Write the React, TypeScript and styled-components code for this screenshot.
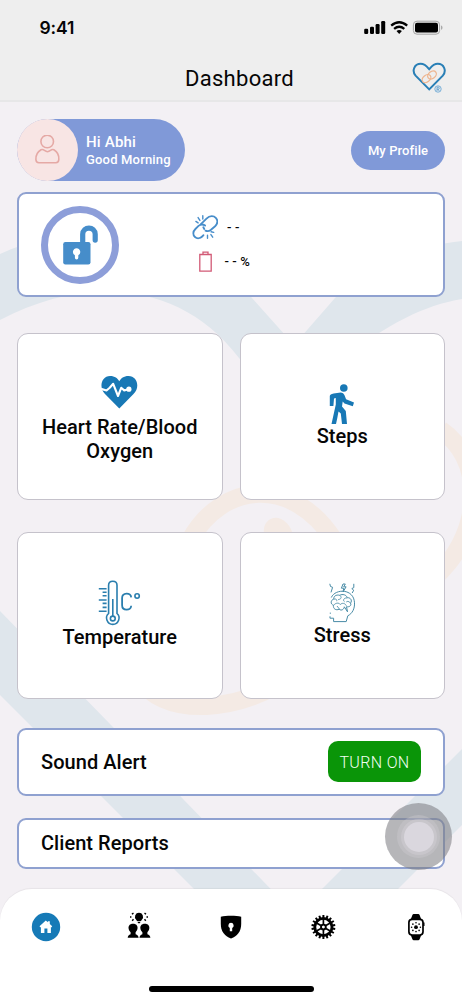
import React from 'react';
import styled, { createGlobalStyle } from 'styled-components';

const Global = createGlobalStyle`
  * { box-sizing: border-box; }
  body { margin: 0; background: #f3f0f4; font-family: Roboto, "Liberation Sans", sans-serif; color: #060606; }
  svg { display: block; flex: none; }
  button { font: inherit; border: 0; padding: 0; }
`;

const BLUE = '#1878b5';
const PERI = '#8099d8';

const Screen = styled.div`
  position: relative;
  width: 462px;
  height: 1000px;
  overflow: hidden;
  display: flex;
  flex-direction: column;
  background: #f3f0f4;
`;
const Watermark = styled.svg`
  position: absolute;
  inset: 0;
`;
const Header = styled.header`
  position: relative;
  height: 102px;
  background: #eeeeee;
  border-bottom: 2px solid #e7e7e8;
`;
const StatusBar = styled.div`
  height: 56px;
  padding: 0 19px 0 39.5px;
  display: flex;
  align-items: center;
  justify-content: space-between;
`;
const Clock = styled.span`
  font: 600 17.5px/22px Inter, sans-serif;
  letter-spacing: -0.1px;
`;
const TitleBar = styled.div`
  height: 44px;
  padding: 0 15px 0 16px;
  display: grid;
  grid-template-columns: 36px 1fr 36px;
  align-items: center;
`;
const Title = styled.h1`
  margin: 2px 0 0 16px;
  text-align: center;
  font-size: 22px;
  font-weight: 400;
  line-height: 26px;
  letter-spacing: 0.3px;
`;
const Content = styled.main`
  position: relative;
  height: 787px;
  flex: none;
  padding: 17px 17px 20px;
  display: flex;
  flex-direction: column;
`;
const ProfileRow = styled.div`
  display: flex;
  align-items: center;
  justify-content: space-between;
`;
const Greeting = styled.div`
  width: 168px;
  height: 62px;
  border-radius: 31px;
  background: ${PERI};
  color: #fff;
  display: flex;
  align-items: center;
  gap: 8px;
`;
const Avatar = styled.div`
  width: 61px;
  height: 62px;
  border-radius: 50%;
  background: #f8e5e4;
  display: flex;
  align-items: center;
  justify-content: center;
`;
const Hello = styled.div`
  font-size: 15px;
  font-weight: 500;
  line-height: 18px;
  letter-spacing: 0.2px;
`;
const Wish = styled.div`
  font-size: 13px;
  font-weight: 500;
  line-height: 17px;
  letter-spacing: 0.18px;
  white-space: nowrap;
`;
const ProfileButton = styled.button`
  width: 94px;
  height: 39px;
  border-radius: 20px;
  background: ${PERI};
  color: #fff;
  font-size: 13px;
  font-weight: 500;
  letter-spacing: 0.1px;
`;
const Panel = styled.section<{ $height: number; $top: number }>`
  height: ${(p) => p.$height}px;
  margin-top: ${(p) => p.$top}px;
  flex: none;
  padding: 0 22px;
  background: #fff;
  border: 2px solid #8fa1d0;
  border-radius: 9px;
  display: flex;
  align-items: center;
  justify-content: space-between;
`;
const DevicePanel = styled(Panel)`
  justify-content: flex-start;
  gap: 73px;
`;
const LockRing = styled.div`
  width: 78px;
  height: 78px;
  border: 7px solid #8d9ed9;
  border-radius: 50%;
  display: flex;
  align-items: center;
  justify-content: center;
`;
const Readings = styled.div`
  display: flex;
  flex-direction: column;
  gap: 9px;
`;
const Reading = styled.div<{ $indent?: number }>`
  height: 25px;
  display: flex;
  align-items: center;
  gap: 9px;
  padding-left: ${(p) => p.$indent ?? 0}px;
  font-size: 13px;
  font-weight: 500;
  letter-spacing: 0.15px;
  white-space: pre;
`;
const Grid = styled.div`
  margin-top: 36px;
  display: grid;
  grid-template-columns: 1fr 1fr;
  grid-auto-rows: 167px;
  gap: 31.5px 17px;
`;
const Tile = styled.div<{ $pad: number }>`
  background: #fff;
  border: 1px solid #c5c2cb;
  border-radius: 11px;
  display: flex;
  flex-direction: column;
  align-items: center;
  padding-top: ${(p) => p.$pad}px;
`;
const TileLabel = styled.div<{ $shift?: number }>`
  width: 170px;
  margin-top: ${(p) => p.$shift ?? 0}px;
  text-align: center;
  font-size: 20px;
  font-weight: 500;
  line-height: 24px;
  letter-spacing: 0.03px;
`;
const PanelTitle = styled.div`
  font-size: 20px;
  font-weight: 500;
  letter-spacing: 0.05px;
`;
const TurnOn = styled.button`
  width: 93px;
  height: 41px;
  padding-top: 2px;
  border-radius: 10px;
  background: #0a9508;
  color: #f2fff2;
  font-size: 16px;
  font-weight: 300;
  letter-spacing: 0.35px;
`;
const Nav = styled.nav`
  position: relative;
  height: 111px;
  border-radius: 32px 32px 0 0;
  background: #fff;
  box-shadow: 0 -1px 1px rgba(0, 0, 0, 0.05);
  display: flex;
  flex-direction: column;
  align-items: center;
`;
const Tabs = styled.div`
  width: 100%;
  height: 96.5px;
  padding-top: 23px;
  display: grid;
  grid-template-columns: repeat(5, 1fr);
  justify-items: center;
`;
const HomeIndicator = styled.div`
  width: 165px;
  height: 6px;
  border-radius: 3px;
  background: #000;
`;
const Assist = styled.div`
  position: absolute;
  left: 385px;
  top: 803px;
  width: 67px;
  height: 67px;
  border-radius: 50%;
  background: rgba(125, 125, 130, 0.56);
  display: flex;
  align-items: center;
  justify-content: center;
`;
const AssistRing = styled.div`
  width: 43px;
  height: 43px;
  border-radius: 50%;
  background: rgba(210, 208, 216, 0.32);
  display: flex;
  align-items: center;
  justify-content: center;
`;
const AssistCore = styled.div`
  width: 30px;
  height: 30px;
  border-radius: 50%;
  background: #dad7de;
  box-shadow: 0 0 0 3px rgba(215, 211, 218, 0.4);
`;

const BackgroundArt = () => (
  <Watermark width="462" height="1000" viewBox="0 0 462 1000" fill="none">
    <g stroke="#f4eae4" strokeWidth="18">
      <path d="M190 540C222 482 292 475 334 540C372 600 310 700 206 706C176 707 152 698 138 678" />
      <path d="M441 430C482 458 482 520 449 562C405 616 355 620 300 600" />
    </g>
    <path d="M264 534C262 522 272 515 281 519C290 523 294 534 293 540Z" fill="#f4eae4" />
    <path
      d="M0 254C70 222 190 218 252 298L294 345L335 298C372 262 415 246 462 241C610 232 720 540 588 699L296 991L-36 659C-150 530 -120 310 0 254ZM0 320C-80 370 -100 500 0 611L296 915L540 671C670 520 560 290 462 299C425 305 385 325 345 358L294 417L239 358C180 280 85 275 0 320Z"
      fill="#dfe6ec"
      fillRule="evenodd"
    />
  </Watermark>
);

const SignalIcons = () => (
  <svg width="79" height="16" viewBox="364 20 79 16">
    <g fill="#000">
      <rect x="364.2" y="28.8" width="4" height="5.2" rx="1.2" />
      <rect x="370" y="26.8" width="4" height="7.2" rx="1.2" />
      <rect x="375.6" y="24" width="4" height="10" rx="1.2" />
      <rect x="381.2" y="21" width="4" height="13" rx="1.2" />
      <rect x="415" y="22.8" width="23" height="9.7" rx="2" />
      <path d="M441 25.5C443 26.2 443 29 441 29.8Z" fill="#aaa" />
      <path d="M396.5 30.9Q399.2 29 401.9 30.9L399.2 34Z" />
    </g>
    <g fill="none" stroke="#000" strokeWidth="2.3">
      <path d="M391.2 25.7Q399.2 18.8 407.2 25.7" />
      <path d="M394.1 28.9Q399.2 24.6 404.3 28.9" />
    </g>
    <rect x="413.4" y="21.2" width="26.2" height="13" rx="3.6" fill="none" stroke="#a4a4a4" />
  </svg>
);

const HeartLogo = () => (
  <svg width="36" height="32" viewBox="411 62 36 32" fill="none">
    <path d="M429.2 89.4L415.6 75.6C411.4 70.6 414.6 63.8 420.6 63.8C425.2 63.8 427.2 66.8 429.2 69.2C431.2 66.8 433.2 63.8 437.8 63.8C443.8 63.8 447 70.6 442.8 75.6L429.2 89.4Z" stroke="#297fb6" strokeWidth="2" />
    <g stroke="#eeb58f" strokeWidth="1.3">
      <ellipse cx="426.5" cy="78.6" rx="4.8" ry="3.4" transform="rotate(-38 426.5 78.6)" />
      <ellipse cx="432" cy="75" rx="4.8" ry="3.4" transform="rotate(-38 432 75)" />
    </g>
    <circle cx="438" cy="89" r="3.2" stroke="#5c9fd2" strokeWidth=".8" />
    <path d="M437 91V87.2H438.3C439.7 87.2 439.7 89.2 438.3 89.2H437M438.2 89.2L439.2 91" stroke="#438fc7" strokeWidth=".7" />
  </svg>
);

const PersonIcon = () => (
  <svg width="27" height="31" viewBox="34.5 134.5 27 31" fill="none" stroke="#e5a9a5" strokeWidth="1.6">
    <circle cx="47.7" cy="141" r="6.3" />
    <path d="M41.5 149.3C44.2 147.7 45 151.2 48 151.2C51 151.2 51.7 147.7 54.4 149.3C58 151.4 59.6 154.6 59.3 159C59.2 161.2 58.5 162.2 56.4 162.2H39.4C37.2 162.2 36.5 161.2 36.4 159C36.2 154.6 38 151.4 41.5 149.3Z" />
  </svg>
);

const UnlockIcon = () => (
  <svg width="35" height="40" viewBox="63 225 35 40">
    <path d="M82.7 243V233.6C82.7 225.3 95.2 225.3 95.2 233.6V239.4" transform="translate(0 .7)" fill="none" stroke="#468dca" strokeWidth="5.2" strokeLinecap="round" />
    <rect x="63.2" y="242" width="27.3" height="22.5" rx="2.2" fill="#468dca" />
    <path d="M76.6 248.2A3.8 3.8 0 0 1 78.3 255.3V257.8A1.7 1.7 0 0 1 74.9 257.8V255.3A3.8 3.8 0 0 1 76.6 248.2Z" fill="#fff" />
  </svg>
);

const BrokenLink = () => (
  <svg width="26" height="25" viewBox="192.5 215 26 25" fill="none" stroke="#478dca" strokeWidth="1.8" strokeLinecap="round">
    <path d="M201.4 224.2L207 218.6C210.4 215.2 214.4 215.8 216.3 217.9C218.4 220.3 218.2 223.6 215.6 226.3L211.2 230C209.6 231.2 207.6 231.4 206 230.6" />
    <path d="M205.6 225.6C203.4 224 200.8 224.4 199 225.9L195.9 229C193.2 231.6 193.2 235 195.5 237C197.7 239 200.8 238.4 202.7 236.5L204 235.2M203.8 227.2L204.8 229" />
    <path d="M203.3 215.8V219M198.6 217.6L200.4 220.4M196.4 221.4L198.6 222.9M208 235.2V238.2M211.4 234.6L213.2 237.2M211.6 231.8L214.2 232.4" strokeWidth="1.4" />
  </svg>
);

const BatteryIcon = () => (
  <svg width="13" height="21" viewBox="199 251 13 21" fill="none" stroke="#d25a76" strokeWidth="1.3">
    <path d="M199.8 254.5H211.2V271.1H199.8ZM203 254.3V252.1H208V254.3" />
  </svg>
);

const HeartRateIcon = () => (
  <svg width="37" height="34" viewBox="101 375 37 34">
    <path d="M119.3 408.5L105 394C98.5 387.5 101.4 376 110 376C115 376 117.6 378.4 119.3 381.3C121 378.4 123.6 376 128.5 376C137.3 376 140.4 387.5 133.5 394Z" fill={BLUE} />
    <path d="M101 388.8L106.5 390.5L109.7 387.8L113.2 383.8L118 396L121.2 387.8L124.2 390.4L129 389" fill="none" stroke="#fff" strokeWidth="2.1" strokeLinejoin="round" />
    <circle cx="128.9" cy="389.2" r="2.6" fill="#fff" />
  </svg>
);

const WalkIcon = () => (
  <svg width="26" height="41" viewBox="329 384 26 41">
    <circle cx="343.8" cy="388" r="3.8" fill={BLUE} />
    <path d="M333.6 393.5L340.7 392.5Q343.5 392.4 344.4 395L346.1 399.3L354 402.5L352.8 406.3L344.5 403.4L342.7 401.5L342 406.4L345.8 411L347 424H342L340.8 413.5L338.5 411.5L337.3 418L336 424H331.5L335.8 404.5V398L334 398.4L333.4 406H329.8V396Q329.9 394.1 333.6 393.5Z" fill={BLUE} />
  </svg>
);

const ThermoIcon = () => (
  <svg width="43" height="46" viewBox="98 580 43 46" fill="none" stroke="#2a7eae" strokeWidth="1.6">
    <path d="M108.6 613.5V585.2C108.6 579.9 117 579.9 117 585.2V613.5C121.2 617 118.5 624.4 112.8 624.4C107.1 624.4 104.4 617 108.6 613.5Z" />
    <path d="M112.8 599V616M98.8 588.8H106.6M102.6 592.2H106.6M102.6 595.8H106.6M98.8 600H106.6M102.6 603.4H106.6M102.6 607.4H106.6M98.8 611.3H106.6" />
    <circle cx="112.8" cy="618.5" r="2.4" />
    <path d="M131.2 597.4C131 592.2 122.1 592.2 122.1 598V605.2C122.1 611 131 611 131.2 605.8" strokeWidth="1.8" />
    <circle cx="137.1" cy="596" r="2.2" />
  </svg>
);

const StressIcon = () => (
  <svg width="27" height="40" viewBox="329 583 27 40" fill="none" stroke="#488ba6" strokeWidth="1">
    <path d="M329.8 618.2H333.6V621.6H346.2L347.8 615.8C352.4 613.5 354.8 608.6 354.5 602.8C353.9 588.6 335.5 588.2 331.3 597.5M330.3 612.6V613.8M330 616.3V618" />
    <path d="M339.8 595.3C336 594.3 333.3 596.5 333.9 599C330.3 600.1 330.4 604.4 333.6 605.3C332.7 608.6 336 610.8 339.1 609.2C341.8 611.4 344.2 608.8 344.3 606.8L347.5 611.8L346.5 606.7C349 607.2 351.9 605.8 350.5 603.1C352.7 600.4 350.2 597.2 347.3 597.8C346.4 594.7 342.5 593.7 339.8 595.3Z" />
    <path d="M340 595.5C342.6 598 340.1 599.5 338 599.6M334.1 599.2C336 598.4 337.2 600 336.7 601.2M333.7 605.2C335.6 602.8 338.7 602.4 340.3 604.5C342.2 602.5 345.2 603.2 346.4 605.8M347.1 597.9C343.6 597.7 342.6 600.6 344.6 601.8M350.3 603C348.6 600.7 346.9 601.3 346.2 602.1M337 606L339.4 609" strokeWidth=".85" />
    <path d="M329.8 583.8L330.5 586.5L332.6 587.3L331 592.4M343 584L341.4 588.2H343.8L343 592L346.1 586.8H343.7L345.3 584ZM353.8 583.8V587.6L351.8 588.6L353.7 590.2L352.2 593" />
  </svg>
);

const HomeIcon = () => (
  <svg width="30" height="30" viewBox="31.5 912 30 30">
    <circle cx="46.5" cy="927" r="14.2" fill="#167ab7" />
    <path d="M46.3 920.6L48.4 922.3V921.3H50.3V924L52.7 926.2L51.8 927.4L51.4 927V933H47.9V928.6H44.9V933H41.4V927L41 927.4L40 926.2Z" fill="#fff" />
  </svg>
);

const PeopleIcon = () => (
  <svg width="30" height="30" viewBox="124 912 30 30" fill="#000">
    <path d="M139 912.8A4 4 0 0 1 141.8 919.7L141 921H137L136.2 919.7A4 4 0 0 1 139 912.8ZM137.4 921.8H140.6L139.8 923.2H138.2Z" />
    <path d="M133 923.8C136.5 923.8 137.9 926 137.5 928.6C137.3 930.5 136.2 931.6 135.6 932.3V934.2C137.4 934.9 138.4 935.7 138.6 937.7H127.7C127.9 935.7 128.8 934.9 130.6 934.2V932.3C129.8 931.6 128.8 930.5 128.6 928.6C128.2 926 129.6 923.8 133 923.8Z" />
    <path d="M144.8 923.8C148.3 923.8 149.7 926 149.3 928.6C149.1 930.5 148 931.6 147.4 932.3V934.2C149.2 934.9 150.2 935.7 150.4 937.7H139.5C139.7 935.7 140.6 934.9 142.4 934.2V932.3C141.6 931.6 140.6 930.5 140.4 928.6C140 926 141.4 923.8 144.8 923.8Z" />
    <path d="M133.5 913.2L131.9 914.2M131.4 917H130M133.5 919.3L132.2 920.8M144.5 913.2L146 914.2M146.5 917H148M144.5 919.3L145.8 920.8" stroke="#000" strokeWidth="1.4" />
  </svg>
);

const ShieldIcon = () => (
  <svg width="30" height="30" viewBox="216 912 30 30">
    <path d="M231 915.8C235 915.8 238.5 916.1 241.2 916.8V923.8C241.2 931.4 237.5 936.2 231 938.6C224.5 936.2 220.8 931.4 220.8 923.8V916.8C223.5 916.1 227 915.8 231 915.8Z" fill="#000" />
    <path d="M231 922.8A2.7 2.7 0 0 1 232.2 927.9V931.3H229.8V927.9A2.7 2.7 0 0 1 231 922.8Z" fill="#fff" />
  </svg>
);

const GearIcon = () => (
  <svg width="30" height="30" viewBox="-15.4 -15 30 30" fill="none" stroke="#000">
    <circle r="8.6" strokeWidth="2.8" />
    <circle r="2.4" strokeWidth="1.9" />
    {Array.from({ length: 18 }, (_, i) => (
      <path key={i} d="M0 -9V-12" strokeWidth="2" transform={`rotate(${i * 20})`} />
    ))}
    {Array.from({ length: 6 }, (_, i) => (
      <path key={i} d="M0 -2.8V-8" strokeWidth="1.7" transform={`rotate(${i * 60})`} />
    ))}
  </svg>
);

const WatchIcon = () => (
  <svg width="30" height="30" viewBox="401 912 30 30">
    <path d="M410.5 920L412.4 914.9Q412.8 914 413.8 914H418.2Q419.2 914 419.6 914.9L421.5 920ZM410.5 934.4L412.4 939.3Q412.8 940.3 413.8 940.3H418.2Q419.2 940.3 419.6 939.3L421.5 934.4Z" fill="#000" />
    <rect x="408.9" y="919.4" width="14.1" height="15.6" rx="3.2" fill="#fff" stroke="#000" strokeWidth="1.7" />
    <path d="M423.2 922.6H424.5V926H423.2Z" fill="#000" />
    <circle cx="416" cy="927.2" r="1.9" />
    {Array.from({ length: 8 }, (_, i) => (
      <circle key={i} cx="416" cy="922.8" r=".8" transform={`rotate(${i * 45} 416 927.2)`} />
    ))}
  </svg>
);

export default function App() {
  return (
    <Screen>
      <Global />
      <BackgroundArt />
      <Header>
        <StatusBar>
          <Clock>9:41</Clock>
          <SignalIcons />
        </StatusBar>
        <TitleBar>
          <span />
          <Title>Dashboard</Title>
          <HeartLogo />
        </TitleBar>
      </Header>
      <Content>
        <ProfileRow>
          <Greeting>
            <Avatar><PersonIcon /></Avatar>
            <div>
              <Hello>Hi Abhi</Hello>
              <Wish>Good Morning</Wish>
            </div>
          </Greeting>
          <ProfileButton>My Profile</ProfileButton>
        </ProfileRow>
        <DevicePanel $height={105} $top={11}>
          <LockRing><UnlockIcon /></LockRing>
          <Readings>
            <Reading><BrokenLink />- -</Reading>
            <Reading $indent={7}><BatteryIcon /> - - %</Reading>
          </Readings>
        </DevicePanel>
        <Grid>
          <Tile $pad={41}><HeartRateIcon /><TileLabel $shift={6}>Heart Rate/Blood Oxygen</TileLabel></Tile>
          <Tile $pad={50}><WalkIcon /><TileLabel $shift={-1}>Steps</TileLabel></Tile>
          <Tile $pad={47}><ThermoIcon /><TileLabel $shift={-1}>Temperature</TileLabel></Tile>
          <Tile $pad={50}><StressIcon /><TileLabel>Stress</TileLabel></Tile>
        </Grid>
        <Panel $height={68} $top={29}>
          <PanelTitle>Sound Alert</PanelTitle>
          <TurnOn>TURN ON</TurnOn>
        </Panel>
        <Panel $height={51} $top={22}>
          <PanelTitle>Client Reports</PanelTitle>
        </Panel>
      </Content>
      <Nav>
        <Tabs>
          <HomeIcon />
          <PeopleIcon />
          <ShieldIcon />
          <GearIcon />
          <WatchIcon />
        </Tabs>
        <HomeIndicator />
      </Nav>
      <Assist><AssistRing><AssistCore /></AssistRing></Assist>
    </Screen>
  );
}
